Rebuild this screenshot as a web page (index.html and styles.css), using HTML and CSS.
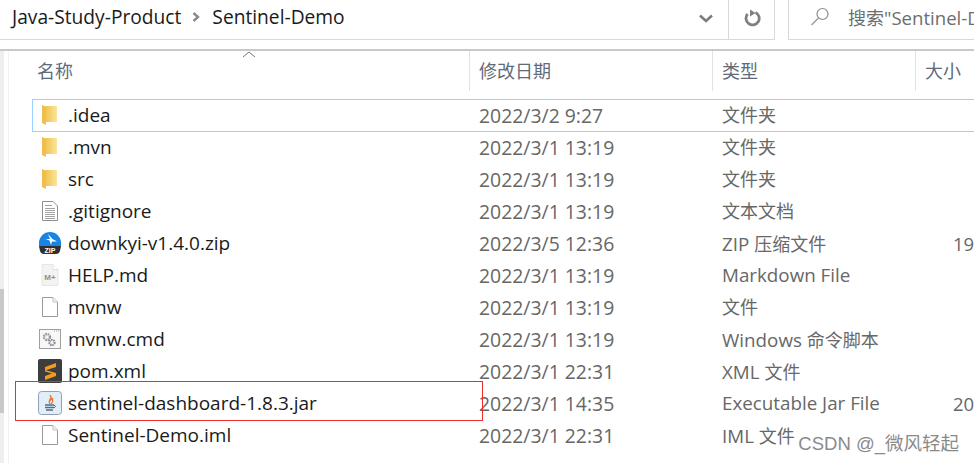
FILE: index.html
```html
<!DOCTYPE html>
<html lang="zh-CN">

<head>
    <meta charset="UTF-8">
    <meta name="viewport" content="width=device-width, initial-scale=1.0">
    <title>Sentinel-Demo</title>
    <link rel="stylesheet" href="styles.css">
</head>

<body>
    <div class="window">
        <div class="toolbar">
            <div class="address">
                <span class="crumb">Java-Study-Product</span>
                <svg class="crumb-arrow" width="8" height="10" viewBox="0 0 8 10"><path d="M1.5 1 L6 5 L1.5 9" fill="none" stroke="#8a8a8a" stroke-width="2.4"/></svg>
                <span class="crumb">Sentinel-Demo</span>
            </div>
            <div class="drop">
                <svg width="14" height="9" viewBox="0 0 14 9"><path d="M1 1.5 L7 7 L13 1.5" fill="none" stroke="#7d7d7d" stroke-width="2.6"/></svg>
            </div>
            <div class="refresh">
                <svg width="18" height="18" viewBox="0 0 18 18"><path d="M4.6 5 A6.6 6.6 0 1 0 12.5 3.4" fill="none" stroke="#808080" stroke-width="2.8"/><path d="M8.5 0.5 V7.5 L14 4 Z" fill="#808080" transform="translate(-1.5 0)"/></svg>
            </div>
            <div class="search">
                <svg class="search-icon" width="20" height="20" viewBox="0 0 20 20"><circle cx="12.5" cy="7" r="5.5" fill="none" stroke="#8c8c8c" stroke-width="1.2"/><path d="M8.5 11 L1.5 18" stroke="#a89f94" stroke-width="1.6"/></svg>
                <span class="search-text"><span class="cjk">搜索</span>"Sentinel-D</span>
            </div>
        </div>

        <div class="pane">
            <div class="side"></div>
            <div class="files">
                <div class="head">
                    <div class="col-name">名称<svg class="sort" width="14" height="7" viewBox="0 0 14 7"><path d="M1 6 L7 1 L13 6" fill="none" stroke="#777" stroke-width="1"/></svg></div>
                    <div class="col-date">修改日期</div>
                    <div class="col-type">类型</div>
                    <div class="col-size">大小</div>
                </div>

                <div class="row selected">
                    <div class="col-name"><svg class="icon" width="18" height="22" viewBox="0 0 18 22"><use href="#folder"/></svg>.idea</div>
                    <div class="col-date">2022/3/2 9:27</div>
                    <div class="col-type cjk">文件夹</div>
                    <div class="col-size"></div>
                </div>
                <div class="row">
                    <div class="col-name"><svg class="icon" width="18" height="22" viewBox="0 0 18 22"><use href="#folder"/></svg>.mvn</div>
                    <div class="col-date">2022/3/1 13:19</div>
                    <div class="col-type cjk">文件夹</div>
                    <div class="col-size"></div>
                </div>
                <div class="row">
                    <div class="col-name"><svg class="icon" width="18" height="22" viewBox="0 0 18 22"><use href="#folder"/></svg>src</div>
                    <div class="col-date">2022/3/1 13:19</div>
                    <div class="col-type cjk">文件夹</div>
                    <div class="col-size"></div>
                </div>
                <div class="row">
                    <div class="col-name">
                        <svg class="icon" width="18" height="22" viewBox="0 0 18 22">
                            <path d="M1.5 1.5 H12 L16.5 6 V20.5 H1.5 Z" fill="#fff" stroke="#8f8f8f"/>
                            <path d="M4 5.5 H11 M4 8.5 H14 M4 10.5 H14 M4 12.5 H14 M4 14.5 H14 M4 16.5 H14 M4 18.5 H14" stroke="#a3a3a3"/>
                        </svg>.gitignore
                    </div>
                    <div class="col-date">2022/3/1 13:19</div>
                    <div class="col-type cjk">文本文档</div>
                    <div class="col-size"></div>
                </div>
                <div class="row">
                    <div class="col-name">
                        <svg class="icon" width="24" height="24" viewBox="0 0 24 24">
                            <path d="M1 12 A11 11 0 0 1 23 12 V15 H1 Z" fill="#1685e4"/>
                            <path d="M10 3 L14.5 8 L19 10.5 L14 10.5 L13 14 L11.5 9.5 L7.5 8 L12 8 Z" fill="#fff"/>
                            <path d="M1 15 H23 L22 20 Q21 23 18 23 H6 Q3 23 2 20 Z" fill="#2f2f2f"/>
                            <text x="12" y="22" class="zip-label">ZIP</text>
                        </svg>downkyi-v1.4.0.zip
                    </div>
                    <div class="col-date">2022/3/5 12:36</div>
                    <div class="col-type">ZIP <span class="cjk">压缩文件</span></div>
                    <div class="col-size">19</div>
                </div>
                <div class="row">
                    <div class="col-name">
                        <svg class="icon" width="18" height="23" viewBox="0 0 18 23">
                            <path d="M1 1 H12 L17 6 V22 H1 Z" fill="#f3f3f3" stroke="#e6e6e6"/>
                            <path d="M12 1 V6 H17" fill="#fff" stroke="#e0e0e0"/>
                            <text x="9" y="16" class="md-label">M+</text>
                        </svg>HELP.md
                    </div>
                    <div class="col-date">2022/3/1 13:19</div>
                    <div class="col-type">Markdown File</div>
                    <div class="col-size"></div>
                </div>
                <div class="row">
                    <div class="col-name"><svg class="icon" width="18" height="22" viewBox="0 0 18 22"><use href="#blank"/></svg>mvnw</div>
                    <div class="col-date">2022/3/1 13:19</div>
                    <div class="col-type cjk">文件</div>
                    <div class="col-size"></div>
                </div>
                <div class="row">
                    <div class="col-name">
                        <svg class="icon" width="22" height="20" viewBox="0 0 22 20">
                            <rect x="0.5" y="0.5" width="21" height="19" fill="#f7f7f7" stroke="#9f9f9f"/>
                            <path d="M15 2 H21" stroke="#9f9f9f" stroke-dasharray="1 1"/>
                            <circle cx="8" cy="8" r="3" fill="none" stroke="#8b97a3" stroke-width="2.4" stroke-dasharray="1.6 .8"/>
                            <circle cx="13" cy="13.5" r="2.6" fill="none" stroke="#8b8b8b" stroke-width="2.2" stroke-dasharray="1.5 .7"/>
                        </svg>mvnw.cmd
                    </div>
                    <div class="col-date">2022/3/1 13:19</div>
                    <div class="col-type">Windows <span class="cjk">命令脚本</span></div>
                    <div class="col-size"></div>
                </div>
                <div class="row">
                    <div class="col-name">
                        <svg class="icon" width="24" height="24" viewBox="0 0 24 24">
                            <rect width="24" height="24" rx="2" fill="#3d3d3d"/>
                            <path d="M18 4 V8 L7 11.5 V8 Z" fill="#f29c1f"/>
                            <path d="M7 11 L18 14 V17 L7 21 V17 L14 14.5 L7 12.5 Z" fill="#f29c1f"/>
                        </svg>pom.xml
                    </div>
                    <div class="col-date">2022/3/1 22:31</div>
                    <div class="col-type">XML <span class="cjk">文件</span></div>
                    <div class="col-size"></div>
                </div>
                <div class="row">
                    <div class="col-name">
                        <svg class="icon" width="24" height="24" viewBox="0 0 24 24">
                            <rect x="0.5" y="0.5" width="23" height="23" rx="3" fill="#e3edf6" stroke="#8fa2b4"/>
                            <path d="M12 4 C15 7 9 9 12 13 C10 10 14 9 15 7 C14 9 16 11 13 13 C16 10 14 8 12 4 Z" fill="#e8762b" stroke="#e8762b"/>
                            <path d="M7 14 H16 M7 16.5 H16 M8 19 H15" stroke="#4c6f90" stroke-width="1.3"/>
                            <path d="M16 14 Q19 15 16 17" fill="none" stroke="#4c6f90"/>
                        </svg>sentinel-dashboard-1.8.3.jar
                    </div>
                    <div class="col-date">2022/3/1 14:35</div>
                    <div class="col-type">Executable Jar File</div>
                    <div class="col-size">20</div>
                </div>
                <div class="row">
                    <div class="col-name"><svg class="icon" width="18" height="22" viewBox="0 0 18 22"><use href="#blank"/></svg>Sentinel-Demo.iml</div>
                    <div class="col-date">2022/3/1 22:31</div>
                    <div class="col-type">IML <span class="cjk">文件</span></div>
                    <div class="col-size"></div>
                </div>
            </div>
        </div>

        <div class="red-box"></div>
        <div class="watermark">CSDN @_微风轻起</div>
    </div>

    <svg class="defs" width="0" height="0">
        <defs>
            <linearGradient id="folder-fill" x1="0" y1="0" x2="1" y2="0">
                <stop offset="0" stop-color="#f0c655"/>
                <stop offset="1" stop-color="#fbe49a"/>
            </linearGradient>
            <g id="folder">
                <path d="M5 2 H16 V18 H5 Z" fill="url(#folder-fill)"/>
                <path d="M1 1 L5 2.5 V21 L1 19 Z" fill="#efbe4c"/>
            </g>
            <g id="blank">
                <path d="M1.5 1.5 H12 L16.5 6 V20.5 H1.5 Z" fill="#fff" stroke="#9a9a9a"/>
                <path d="M12 1.5 V6 H16.5" fill="#f3f3f3" stroke="#c4c4c4"/>
            </g>
        </defs>
    </svg>
</body>

</html>
```

FILE: styles.css
```css
* {
    box-sizing: border-box;
}

body {
    margin: 0;
    background-color: #fff;
    font-family: "Open Sans", "Noto Sans CJK SC", sans-serif;
    font-size: 19px;
    color: #1a1a1a;
    overflow: hidden;
}

.window {
    position: relative;
    width: 974px;
    height: 463px;
    overflow: hidden;
}

.defs {
    position: absolute;
}

.cjk {
    font-size: 18px;
}

/* top bar */
.toolbar {
    display: flex;
    height: 40px;
}

.address {
    display: flex;
    align-items: center;
    flex: none;
    width: 688px;
    padding: 0 0 6px 12px;
    border-bottom: 1px solid #d9d9d9;
    font-size: 19.2px;
}

.crumb-arrow {
    margin: 0 12px 0 11px;
}

.drop {
    display: flex;
    align-items: center;
    justify-content: center;
    flex: none;
    width: 40px;
    padding: 0 4px 3px 0;
    border-bottom: 1px solid #d9d9d9;
}

.refresh {
    display: flex;
    align-items: center;
    justify-content: center;
    flex: none;
    width: 47px;
    padding-bottom: 3px;
    border-left: 1px solid #d9d9d9;
    border-right: 1px solid #d9d9d9;
    border-bottom: 1px solid #d9d9d9;
}

.search {
    display: flex;
    align-items: center;
    flex: 1;
    min-width: 0;
    margin-left: 13px;
    padding: 0 0 5px 21px;
    border-left: 1px solid #d9d9d9;
    border-bottom: 1px solid #d9d9d9;
    color: #6d6d6d;
    white-space: nowrap;
    overflow: hidden;
}

.search-icon {
    flex: none;
}

.search-text {
    margin-left: 18px;
    font-size: 18.6px;
}

/* file list */
.pane {
    display: flex;
    height: 423px;
    margin-top: 9px;
    border-top: 2px solid #c9c9c9;
}

.side {
    flex: none;
    width: 9px;
    border-right: 1px solid #f0f0f0;
    background: linear-gradient(to bottom, #eeeeee 238px, #c8c8c8 238px, #c8c8c8 362px, #eeeeee 362px) no-repeat left top / 4px 100%;
}

.files {
    flex: 1;
    min-width: 0;
}

.head,
.row {
    display: grid;
    grid-template-columns: 460px 243px 203px 1fr;
}

.head {
    height: 48px;
    font-size: 18px;
    color: #5f6b78;
}

.head > div {
    position: relative;
    display: flex;
    align-items: center;
    height: 40px;
    padding-bottom: 2px;
}

.head .col-name {
    padding-left: 28px;
}

.head .col-date,
.head .col-type,
.head .col-size {
    padding-left: 9px;
    border-left: 1px solid #e2e2e2;
}

.sort {
    position: absolute;
    top: 0;
    left: 233px;
}

.row {
    height: 32px;
    align-items: center;
    white-space: nowrap;
}

.row .col-name {
    position: relative;
    display: flex;
    align-items: center;
    padding-left: 59px;
}

.row .col-date,
.row .col-type,
.row .col-size {
    padding-left: 10px;
    color: #676767;
}

.row .col-date {
    font-size: 19.4px;
}

.row .col-type {
    font-size: 18.8px;
}

.row .col-type.cjk {
    padding-bottom: 3px;
    font-size: 18px;
}

.row .col-size {
    padding-left: 38px;
    font-size: 18.5px;
}

.icon {
    position: absolute;
    left: 41px;
    top: 50%;
    transform: translate(-50%, -50%);
}

.selected {
    position: relative;
}

.selected::before {
    content: "";
    position: absolute;
    inset: 0 -2px -1px 23px;
    border: 1px solid #99d1ff;
}

.zip-label {
    font-family: "Liberation Sans", sans-serif;
    font-size: 7px;
    font-weight: 700;
    fill: #fff;
    text-anchor: middle;
}

.md-label {
    font-family: "Liberation Sans", sans-serif;
    font-size: 8px;
    font-weight: 700;
    fill: #8f8f8f;
    text-anchor: middle;
}

/* annotations on top of the screenshot */
.red-box {
    position: absolute;
    left: 15px;
    top: 381px;
    width: 468px;
    height: 40px;
    border: 1px solid #ee2d2d;
}

.watermark {
    position: absolute;
    right: 15px;
    top: 429px;
    font-family: "Liberation Sans", "Noto Sans CJK SC", sans-serif;
    font-size: 18.5px;
    color: #8a8a8a;
}
```
